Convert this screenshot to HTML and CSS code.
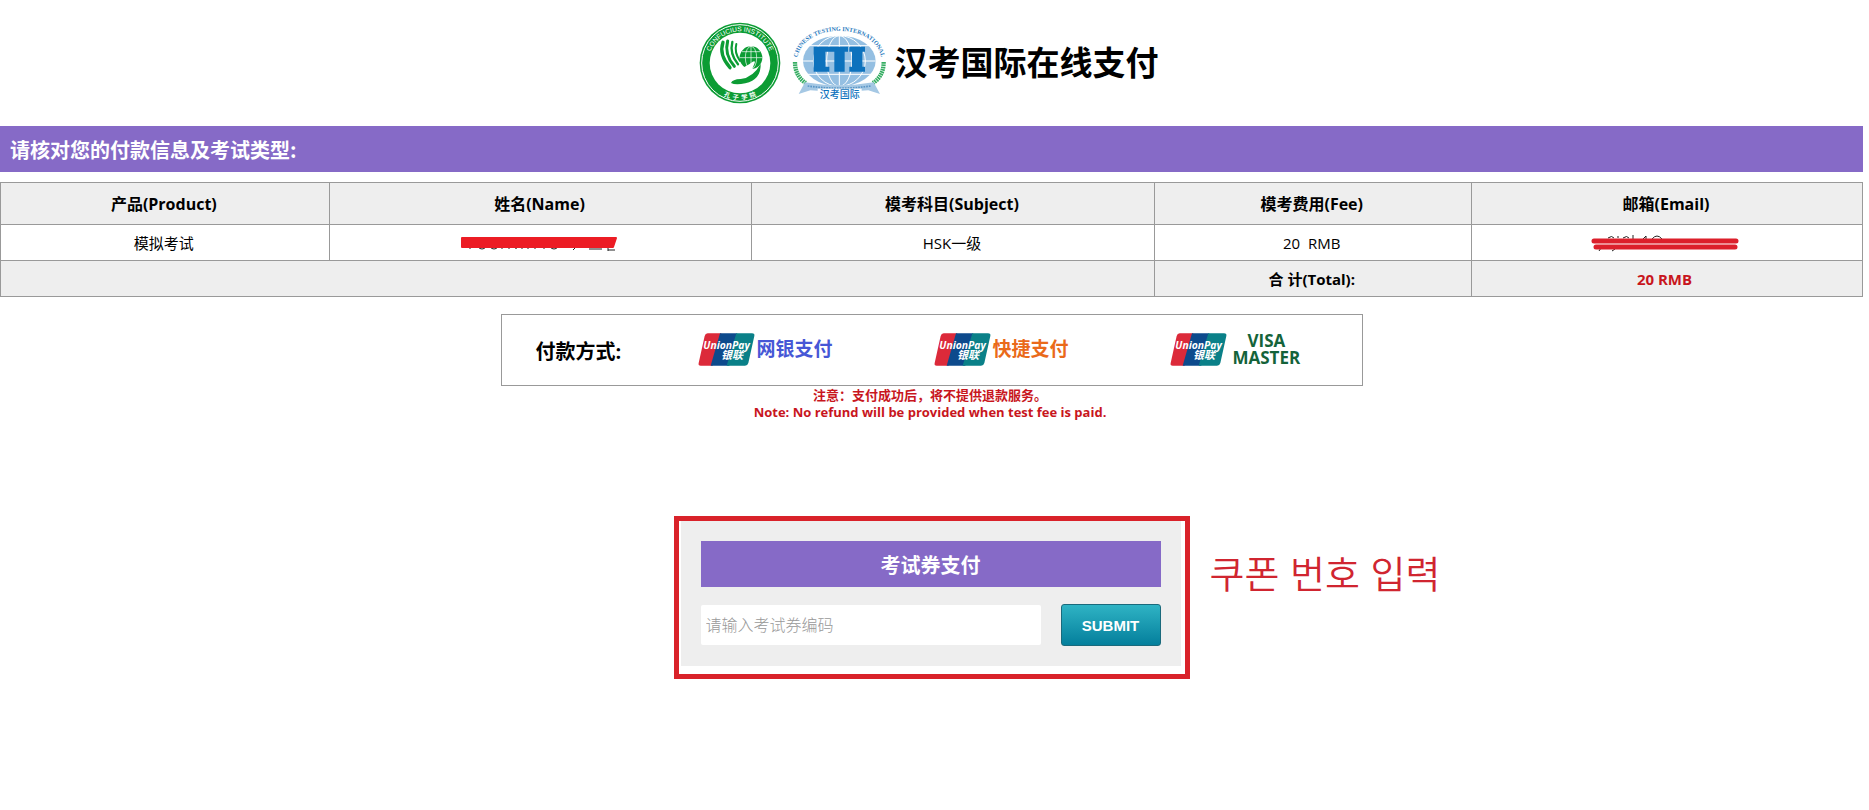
FILE: index.html
```
<!DOCTYPE html>
<html lang="zh-CN">
<head>
<meta charset="UTF-8" />
<meta name="viewport" content="width=device-width, initial-scale=1" />
<title>汉考国际在线支付</title>
<link rel="stylesheet" href="styles.css">
</head>
<body>

<header class="header">
  <svg class="logo-ci" viewBox="25 35 246 246" aria-hidden="true">
    <circle cx="148" cy="158" r="121" fill="#0c9c34" />
    <circle cx="148" cy="158" r="115" fill="none" stroke="#fff" stroke-width="3" />
    <circle cx="148" cy="158" r="91" fill="#fff" />
    <path id="ciTop" d="M53 158A95 95 0 0 1 243 158" fill="none" />
    <path id="ciBottom" d="M38 158A110 110 0 0 0 258 158" fill="none" />
    <text class="ci-text" font-size="20"><textPath href="#ciTop" startOffset="50%" text-anchor="middle">CONFUCIUS INSTITUTE</textPath></text>
    <text class="ci-cn" font-size="19"><textPath href="#ciBottom" startOffset="50%" text-anchor="middle">孔 &#160;子 &#160;学 &#160;院</textPath></text>
    <g fill="none" stroke="#0c9c34" stroke-linecap="round">
      <path d="M97 96Q84 134 118 172" stroke-width="10" />
      <path d="M111 92Q100 132 131 168" stroke-width="9" />
      <path d="M125 95Q116 130 142 162" stroke-width="7" />
      <path d="M137 101Q130 126 148 152" stroke-width="6" />
    </g>
    <circle cx="181" cy="142" r="34" fill="#0c9c34" />
    <g fill="none" stroke="#fff" stroke-width="2">
      <path d="M148 142H215M154 124H208M181 108V176" />
      <ellipse cx="181" cy="142" rx="17" ry="34" />
    </g>
    <path d="M140 175Q164 172 186 154Q197 150 190 163Q186 177 176 186L150 184Z" fill="#fff" />
    <path d="M210 160Q212 207 164 219Q134 225 121 218Q125 207 150 206Q188 201 210 160Z" fill="#0c9c34" />
  </svg>

  <svg class="logo-cti" viewBox="300 42 294 228" aria-hidden="true">
    <path id="ctiArc" d="M319 142C335 32 555 32 571 142" fill="none" />
    <text class="cti-text" font-size="18"><textPath href="#ctiArc" startOffset="50%" text-anchor="middle">CHINESE TESTING INTERNATIONAL</textPath></text>
    <ellipse cx="445" cy="150" rx="109" ry="76" fill="#94bfe2" />
    <g fill="none" stroke="#fff" stroke-width="3">
      <ellipse cx="445" cy="150" rx="38" ry="76" />
      <ellipse cx="445" cy="150" rx="78" ry="76" />
      <path d="M445 74V226M336 150H554M355 104H535M350 190H540" />
    </g>
    <path d="M368 107H471V122H461V182H430V122H403V167H415V182H368ZM475 107H522V122H514V167H522V182H475V167H483V122H475Z" fill="#0d72bd" />
    <g fill="none" stroke="#35ad62" stroke-width="13" stroke-dasharray="5 2">
      <path d="M312 153Q312 195 344 216" />
      <path d="M578 153Q578 195 546 216" />
    </g>
    <path d="M342 214Q445 232 548 214L567 249L532 238Q445 246 358 238L323 249Z" fill="#a5c8e4" />
    <path d="M350 225Q445 238 540 225" fill="none" stroke="#5b96c6" stroke-width="5" stroke-dasharray="5 3" />
    <rect x="380" y="233" width="132" height="37" fill="#fff" />
    <text class="cti-cn" x="446" y="260" font-size="30" text-anchor="middle">汉考国际</text>
  </svg>

  <h1>汉考国际在线支付</h1>
</header>

<main>
  <h2 class="bar">请核对您的付款信息及考试类型:</h2>

  <table class="info">
    <colgroup>
      <col class="col-product" />
      <col class="col-name" />
      <col class="col-subject" />
      <col class="col-fee" />
      <col class="col-email" />
    </colgroup>
    <thead>
      <tr>
        <th>产品(Product)</th>
        <th>姓名(Name)</th>
        <th>模考科目(Subject)</th>
        <th>模考费用(Fee)</th>
        <th>邮箱(Email)</th>
      </tr>
    </thead>
    <tbody>
      <tr>
        <td>模拟考试</td>
        <td>
          <!-- name, struck out -->
          <svg class="strike" width="160" height="20" viewBox="0 0 160 20" aria-hidden="true">
            <path d="M11 14V16M19 14q4 4 8 0M31 14q4 4 8 0M43 14V16M50 14V16M55 14q2 3 4 0M63 14V16M69 14V16M76 14V16M85 14V16M91 14q4 4 8 0M118 13l-4 4M130 16h13M149 13v5M149 17h7" fill="none" stroke="#222" />
            <path d="M3 5H157L154 14H3Z" fill="#ec1c24" stroke="#ec1c24" stroke-width="2" stroke-linejoin="round" />
          </svg>
        </td>
        <td>HSK一级</td>
        <td>20&nbsp; RMB</td>
        <td>
          <!-- e-mail, struck out -->
          <svg class="strike" width="150" height="20" viewBox="0 0 150 20" aria-hidden="true">
            <path d="M17 5q4 -3 6 0M27 3v2M32 5q4 -3 6 0M42 2v4M52 6l3 -3v3M61 6q5 -6 10 0M10 15l-2 3M24 16l-3 2" fill="none" stroke="#222" />
            <path d="M3 8H145M5 14H144" stroke="#dc1f2b" stroke-width="5" stroke-linecap="round" />
          </svg>
        </td>
      </tr>
      <tr class="total">
        <td colspan="3"></td>
        <td>合 计(Total):</td>
        <td class="red">20 RMB</td>
      </tr>
    </tbody>
  </table>

  <section class="payment">
    <h3>付款方式:</h3>
    <a class="pay bank" href="#">
      <svg class="up" viewBox="0 0 171 99" aria-hidden="true">
        <path d="M29 1H70L44 98H8Q0 98 2 90L20 9Q22 1 29 1Z" fill="#dc2a3a" />
        <path d="M66 1H118L94 98H38Z" fill="#0d4a8c" />
        <path d="M115 1H162Q171 1 169 9L151 90Q149 98 141 98H86Z" fill="#0a8088" />
        <text class="up-latin" x="16" y="47" font-size="31">UnionPay</text>
        <text class="up-cn" x="69" y="78" font-size="33">银联</text>
      </svg>
      网银支付
    </a>
    <a class="pay quick" href="#">
      <svg class="up" viewBox="0 0 171 99" aria-hidden="true">
        <path d="M29 1H70L44 98H8Q0 98 2 90L20 9Q22 1 29 1Z" fill="#dc2a3a" />
        <path d="M66 1H118L94 98H38Z" fill="#0d4a8c" />
        <path d="M115 1H162Q171 1 169 9L151 90Q149 98 141 98H86Z" fill="#0a8088" />
        <text class="up-latin" x="16" y="47" font-size="31">UnionPay</text>
        <text class="up-cn" x="69" y="78" font-size="33">银联</text>
      </svg>
      快捷支付
    </a>
    <a class="pay visa" href="#">
      <svg class="up" viewBox="0 0 171 99" aria-hidden="true">
        <path d="M29 1H70L44 98H8Q0 98 2 90L20 9Q22 1 29 1Z" fill="#dc2a3a" />
        <path d="M66 1H118L94 98H38Z" fill="#0d4a8c" />
        <path d="M115 1H162Q171 1 169 9L151 90Q149 98 141 98H86Z" fill="#0a8088" />
        <text class="up-latin" x="16" y="47" font-size="31">UnionPay</text>
        <text class="up-cn" x="69" y="78" font-size="33">银联</text>
      </svg>
      <span>VISA<br />MASTER</span>
    </a>
  </section>

  <p class="note">注意：支付成功后，将不提供退款服务。<br />Note: No refund will be provided when test fee is paid.</p>

  <div class="coupon-frame">
    <form class="coupon">
      <h2 class="bar">考试券支付</h2>
      <div class="coupon-row">
        <input type="text" id="coupon" aria-label="考试券编码" placeholder="请输入考试券编码" />
        <button type="button">SUBMIT</button>
      </div>
    </form>
    <p class="callout" lang="ko">쿠폰 번호 입력</p>
  </div>
</main>

</body>
</html>
```
FILE: styles.css
```
* {
  box-sizing: border-box;
}

body {
  margin: 0 6px 0 0;
  background: #fff;
  color: #000;
  font-family: "Open Sans", "Noto Sans CJK SC", sans-serif;
  font-size: 15px;
}

h1, h2, h3, p {
  margin: 0;
}

/* Header */
.header {
  display: flex;
  justify-content: center;
  align-items: center;
  height: 126px;
  padding-right: 6px;
}

.header h1 {
  margin-left: 6px;
  font-size: 33px;
  line-height: 40px;
}

.logo-ci {
  width: 82px;
  height: 82px;
  margin-right: 10px;
}

.logo-cti {
  width: 98px;
  height: 76px;
}

.ci-text {
  fill: #fff;
  font-family: "Liberation Sans", sans-serif;
}

.ci-cn {
  fill: #fff;
  font-family: "Noto Sans CJK SC", sans-serif;
  font-weight: bold;
}

.cti-text {
  fill: #1f78bd;
  font-family: "Liberation Serif", serif;
  font-weight: bold;
}

.cti-cn {
  fill: #0d72bd;
  font-family: "Noto Sans CJK SC", sans-serif;
  font-weight: 500;
}

/* Purple title bar */
.bar {
  padding: 1px 10px 0;
  background: #866ac7;
  color: #fff;
  font-family: "Noto Sans CJK SC", sans-serif;
  font-size: 20px;
  line-height: 45px;
}

/* Payment information */
.info {
  width: 100%;
  margin-top: 10px;
  border-collapse: collapse;
  table-layout: fixed;
  text-align: center;
}

.col-product { width: 17.65%; }
.col-name { width: 22.7%; }
.col-subject { width: 21.6%; }
.col-fee { width: 17.05%; }

.info th,
.info td {
  height: 36px;
  padding: 0 2px 0 0;
  border: 1px solid #999;
  line-height: 24px;
}

.info th {
  height: 42px;
  background: #eee;
  font-size: 16px;
}

.info .total td {
  background: #eee;
  font-weight: bold;
}

.info .total .red {
  padding-right: 5px;
  color: #c8161d;
}

.strike {
  display: block;
  margin: 0 auto;
}

/* Payment methods */
.payment {
  display: grid;
  grid-template-columns: 196px 236px 236px 1fr;
  align-items: center;
  max-width: 862px;
  height: 72px;
  margin: 17px auto 0;
  border: 1px solid #999;
}

.payment h3 {
  padding: 4px 0 0 34px;
  font-size: 20px;
  line-height: 30px;
}

.pay {
  display: flex;
  align-items: center;
  gap: 2px;
  padding-bottom: 2px;
  font-size: 19px;
  font-weight: bold;
  line-height: 32px;
  text-decoration: none;
}

.up {
  width: 57px;
  height: 33px;
}

.up-latin {
  fill: #fff;
  font-family: "Open Sans", sans-serif;
  font-style: italic;
  font-weight: bold;
}

.up-cn {
  fill: #fff;
  font-family: "Noto Sans CJK SC", sans-serif;
  font-style: italic;
  font-weight: bold;
}

.bank { color: #4657d6; }
.quick { color: #ea6a1a; }

.visa {
  color: #14633a;
  font-size: 17px;
  line-height: 17px;
  text-align: center;
}

.visa span {
  padding-left: 4px;
}

.note {
  padding: 1px 3px 0 0;
  color: #c8161d;
  font-size: 13px;
  font-weight: bold;
  line-height: 17px;
  text-align: center;
}

/* Coupon form */
.coupon-frame {
  position: relative;
  width: 516px;
  margin: 95px auto 0;
  padding: 0 4px 8px 2px;
  border: 5px solid #d9222a;
}

.coupon {
  padding: 20px;
  background: #eee;
}

.coupon .bar {
  text-align: center;
}

.coupon-row {
  display: flex;
  align-items: center;
  gap: 20px;
  margin-top: 17px;
}

.coupon input {
  flex: 1;
  min-width: 0;
  height: 40px;
  padding: 0 5px;
  border: 0;
  border-radius: 2px;
  background: #fff;
  font-family: inherit;
  font-size: 16px;
}

.coupon input::placeholder {
  color: #999;
  font-weight: 300;
}

.coupon button {
  width: 100px;
  height: 42px;
  border: 1px solid #1a6a7c;
  border-radius: 3px;
  background: linear-gradient(#2fb3c4, #047f9c);
  color: #fff;
  font-family: "Liberation Sans", sans-serif;
  font-size: 15px;
  font-weight: bold;
}

/* Callout beside the frame */
.callout {
  position: absolute;
  top: 26px;
  left: 100%;
  margin-left: 25px;
  color: #d02530;
  font-family: "Noto Sans CJK KR", sans-serif;
  font-size: 38px;
  font-weight: 350;
  line-height: 50px;
  white-space: nowrap;
}
```
